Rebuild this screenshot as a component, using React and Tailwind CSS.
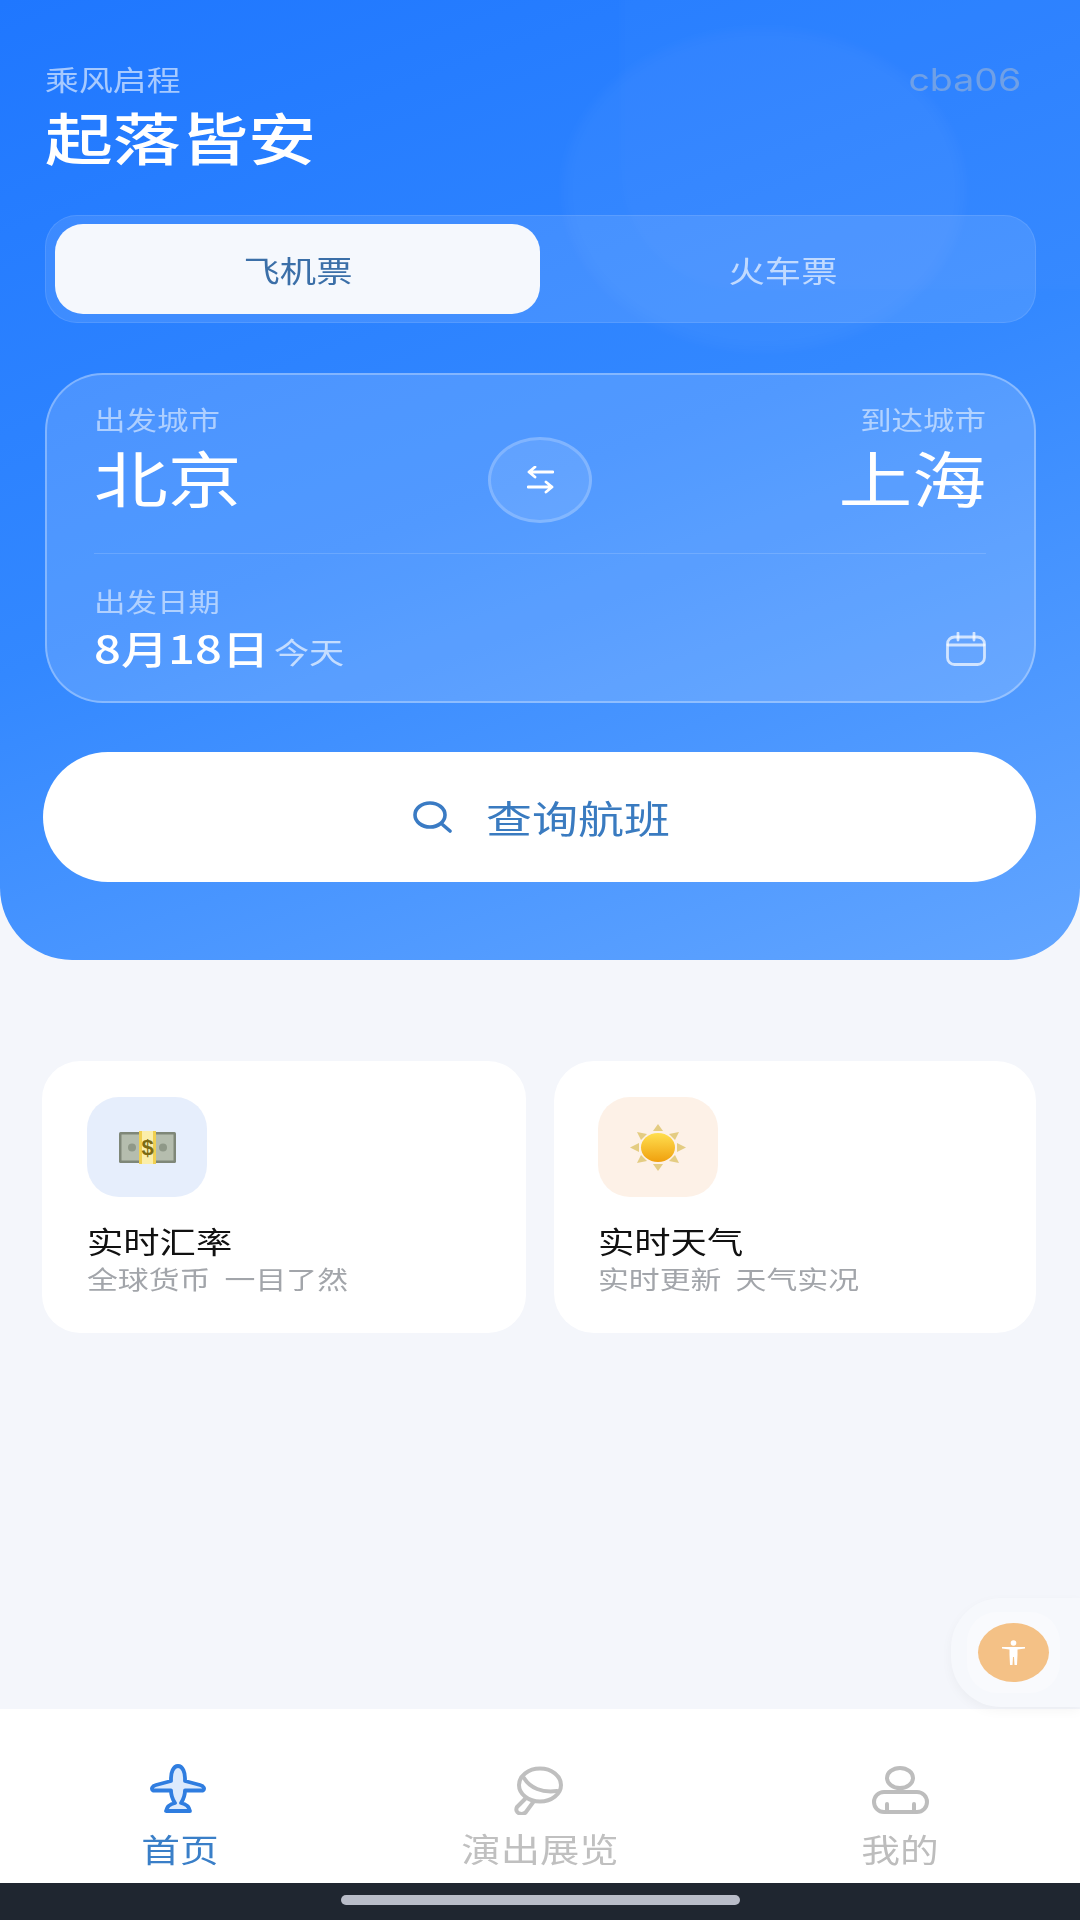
export default function App() {
  return (
    <div className="relative flex h-[1920px] w-[1080px] flex-col overflow-hidden bg-[#f4f6fb] font-['Noto_Sans_CJK_SC',sans-serif]">
      <header className="relative h-[960px] shrink-0 overflow-hidden rounded-b-[72px] bg-[linear-gradient(160deg,#1f77ff_0%,#3388ff_50%,#62a5ff_100%)] px-[45px] pt-[60px]">
        <div className="absolute left-[564px] top-[30px] h-[320px] w-[400px] rounded-[50%] bg-white/[0.035] blur-[6px]" />
        <div className="absolute left-[620px] top-[-10px] h-[300px] w-[470px] rounded-bl-[120px] bg-white/[0.015] blur-[4px]" />
        <div className="relative">
          <div className="flex h-[40px] items-center justify-between pr-[14px]">
            <span className="-mt-[2px] inline-block origin-left scale-x-[1.21] whitespace-nowrap text-[28px] leading-[40px] text-white/60">乘风启程</span>
            <span className="inline-block origin-right scale-x-[1.21] whitespace-nowrap font-['Inter',sans-serif] text-[31px] leading-[40px] text-[#70a0e6]">cba06</span>
          </div>
          <div className="mt-[4px] h-[66px]">
            <span className="inline-block origin-left scale-x-[1.21] whitespace-nowrap text-[56px] font-medium leading-[64px] text-white">起落皆安</span>
          </div>
          <div className="mt-[45px] flex h-[108px] w-[991px] items-center rounded-[32px] border border-white/10 bg-white/10 px-[9px]">
            <div className="flex h-[90px] w-[485px] items-center justify-center rounded-[28px] bg-[#f5f8fd]">
              <span className="inline-block origin-center scale-x-[1.21] whitespace-nowrap text-[30px] leading-[40px] text-[#3b6fa8]">飞机票</span>
            </div>
            <div className="flex h-[90px] flex-1 items-center justify-center">
              <span className="inline-block origin-center scale-x-[1.21] whitespace-nowrap text-[30px] leading-[40px] text-white/65">火车票</span>
            </div>
          </div>
          <div className="mt-[50px] h-[330px] w-[991px] rounded-[58px] border-2 border-white/30 bg-white/15 pl-[47px] pr-[48px] pt-[27px]">
            <div className="flex h-[121px] justify-between">
              <div className="w-[200px]">
                <div className="h-[34px]">
                  <span className="inline-block origin-left scale-x-[1.21] whitespace-nowrap text-[26px] leading-[34px] text-white/55">出发城市</span>
                </div>
                <div className="mt-[6px] h-[70px]">
                  <span className="inline-block origin-left scale-x-[1.21] whitespace-nowrap text-[61px] leading-[70px] text-white">北京</span>
                </div>
              </div>
              <div className="mt-[35px] flex h-[86px] w-[104px] items-center justify-center rounded-[50%] border-[3px] border-white/20 bg-white/10">
                <svg width="27" height="28" viewBox="0 0 27 28" fill="none" stroke="white" strokeWidth="2.8" strokeLinecap="round" strokeLinejoin="round">
                  <path d="M26 6H2M8 1L2 6L8 11" />
                  <path d="M1 21H25M19 16L25 21L19 26" />
                </svg>
              </div>
              <div className="w-[200px] text-right">
                <div className="h-[34px]">
                  <span className="inline-block origin-right scale-x-[1.21] whitespace-nowrap text-[26px] leading-[34px] text-white/55">到达城市</span>
                </div>
                <div className="mt-[6px] h-[70px]">
                  <span className="inline-block origin-right scale-x-[1.21] whitespace-nowrap text-[61px] leading-[70px] text-white">上海</span>
                </div>
              </div>
            </div>
            <div className="mt-[30px] h-[1px] bg-white/15" />
            <div className="mt-[30px] h-[34px]">
              <span className="inline-block origin-left scale-x-[1.21] whitespace-nowrap text-[26px] leading-[34px] text-white/55">出发日期</span>
            </div>
            <div className="mt-[6px] flex h-[50px] items-center justify-between">
              <div className="flex origin-left scale-x-[1.21] items-baseline gap-[4px] whitespace-nowrap">
                <span className="text-[39px] font-medium leading-[50px] text-white">8月18日</span>
                <span className="text-[29px] leading-[50px] text-white/65">今天</span>
              </div>
              <svg width="40" height="34" viewBox="0 0 40 34" fill="none" stroke="white" strokeOpacity="0.7" strokeWidth="2.8" strokeLinecap="round">
                <rect x="1.5" y="5" width="37" height="27.5" rx="7" />
                <path d="M2 13H38M12 1V8M28 1V8" />
              </svg>
            </div>
          </div>
          <button className="mt-[49px] flex h-[130px] w-[993px] -translate-x-[2px] items-center justify-center gap-[33px] rounded-full bg-white">
            <svg width="40" height="32" viewBox="0 0 40 32" fill="none" stroke="#3a7bc4" strokeWidth="3.6" strokeLinecap="round">
              <ellipse cx="17" cy="14" rx="15" ry="12" />
              <path d="M30 24L37 30" />
            </svg>
            <div className="w-[181px] text-left">
              <span className="inline-block origin-left scale-x-[1.21] whitespace-nowrap text-[38px] leading-[48px] text-[#3a7bc0]">查询航班</span>
            </div>
          </button>
        </div>
      </header>

      <section className="mt-[101px] flex gap-[28px] pl-[42px] pr-[44px]">
        <div className="h-[272px] flex-1 rounded-[38px] bg-white pl-[45px] pt-[36px]">
          <div className="flex h-[100px] w-[120px] items-center justify-center rounded-[32px] bg-[#e6eefc]">
            <svg width="57" height="33" viewBox="0 0 57 33">
              <rect x="0" y="1" width="57" height="31" rx="1.5" fill="#7f8778" />
              <rect x="2.5" y="3.5" width="52" height="26" fill="#b5bdae" />
              <circle cx="13" cy="16.5" r="4" fill="#8f9888" />
              <circle cx="44" cy="16.5" r="4" fill="#8f9888" />
              <rect x="20" y="0" width="17" height="33" fill="#f0cf50" />
              <rect x="23" y="0" width="11" height="33" fill="#fbeeaa" />
              <text x="28.5" y="24" textAnchor="middle" fontSize="22" fontWeight="700" fill="#7c6a12" fontFamily="'Liberation Sans', sans-serif">$</text>
            </svg>
          </div>
          <div className="mt-[23px] h-[40px]">
            <span className="inline-block origin-left scale-x-[1.21] whitespace-nowrap text-[30px] leading-[40px] text-[#111111]">实时汇率</span>
          </div>
          <div className="h-[36px]">
            <span className="inline-block origin-left scale-x-[1.21] whitespace-nowrap text-[25.5px] leading-[36px] text-[#a2a5aa] [word-spacing:6px]">全球货币 一目了然</span>
          </div>
        </div>
        <div className="h-[272px] flex-1 rounded-[40px] bg-white pl-[44px] pt-[36px]">
          <div className="flex h-[100px] w-[120px] items-center justify-center rounded-[32px] bg-[#fdf1e7]">
            <svg width="56" height="47" viewBox="0 0 56 47">
              <defs>
                <linearGradient id="sun" x1="0" y1="0" x2="0" y2="1">
                  <stop offset="0" stopColor="#ffdf50" />
                  <stop offset="1" stopColor="#f0a00e" />
                </linearGradient>
              </defs>
              <g fill="#e4cc82">
                <path d="M28 0L33 7H23Z" />
                <path d="M28 47L33 40H23Z" />
                <path d="M0 23.5L9 19V28Z" />
                <path d="M56 23.5L47 19V28Z" />
                <path d="M7 8L17 10L11 16Z" />
                <path d="M49 8L39 10L45 16Z" />
                <path d="M7 39L17 37L11 31Z" />
                <path d="M49 39L39 37L45 31Z" />
              </g>
              <ellipse cx="28" cy="23.5" rx="17" ry="14.5" fill="url(#sun)" />
            </svg>
          </div>
          <div className="mt-[23px] h-[40px]">
            <span className="inline-block origin-left scale-x-[1.21] whitespace-nowrap text-[30px] leading-[40px] text-[#111111]">实时天气</span>
          </div>
          <div className="h-[36px]">
            <span className="inline-block origin-left scale-x-[1.21] whitespace-nowrap text-[25.5px] leading-[36px] text-[#a2a5aa] [word-spacing:6px]">实时更新 天气实况</span>
          </div>
        </div>
      </section>

      <div className="absolute right-0 top-[1598px] flex h-[109px] w-[129px] items-center rounded-l-[50px] bg-[#f6f8fc] pl-[16px] shadow-[0_4px_12px_rgba(0,0,0,0.04)]">
        <div className="flex h-[81px] w-[93px] items-center justify-center rounded-[30px] bg-[#f9fafd]">
          <div className="flex h-[59px] w-[71px] items-center justify-center rounded-[50%] bg-[#f4c186]">
            <svg width="23" height="25" viewBox="0 0 23 25" fill="white">
              <circle cx="11.5" cy="3" r="2.8" />
              <path d="M0 7H23V8.6L15.5 9.5V15L15 25H12.5L12 17H11L10.5 25H8L7.5 15V9.5L0 8.6Z" />
            </svg>
          </div>
        </div>
      </div>

      <nav className="mt-auto flex h-[174px] shrink-0 bg-white">
        <div className="flex w-[360px] flex-col items-center pt-[54px]">
          <svg width="60" height="52" viewBox="20 12 60 52">
            <path d="M48 15C43 15 41 22 41 27V30L26 34C22 35 21 38 23 39.5H41C41 45 43 49 45 52C40 53 37 55 36 60H60C59 55 56 53 51 52C53 49 55 45 55 39.5H73C75 38 74 35 70 34L55 30V27C55 22 53 15 48 15Z" fill="#dceafd" stroke="#2f7de0" strokeWidth="3.8" strokeLinejoin="round" />
          </svg>
          <span className="mt-[13px] inline-block origin-center scale-x-[1.21] whitespace-nowrap text-[32px] leading-[40px] text-[#3a7fc8]">首页</span>
        </div>
        <div className="flex w-[360px] flex-col items-center pt-[54px]">
          <svg width="60" height="52" viewBox="20 12 60 52" fill="none" stroke="#bfbfbf" strokeWidth="4" strokeLinecap="round">
            <ellipse cx="50" cy="34" rx="21" ry="16.5" />
            <path d="M34 27C40 37 52 42 67 40" />
            <path d="M36 47L27 56C24 62 32 65 36 61L44 50" />
          </svg>
          <span className="mt-[13px] inline-block origin-center scale-x-[1.21] whitespace-nowrap text-[32.5px] leading-[40px] text-[#c0c0c0]">演出展览</span>
        </div>
        <div className="flex w-[360px] flex-col items-center pt-[54px]">
          <svg width="60" height="52" viewBox="10 12 60 52" fill="none" stroke="#bdbdbd" strokeWidth="4" strokeLinecap="round">
            <ellipse cx="40" cy="27" rx="13" ry="10" />
            <rect x="14" y="41" width="53" height="20" rx="10" />
            <path d="M27 53V60M54 53V60" />
          </svg>
          <span className="mt-[13px] inline-block origin-center scale-x-[1.21] whitespace-nowrap text-[32px] leading-[40px] text-[#bdbdbd]">我的</span>
        </div>
      </nav>
      <div className="flex h-[37px] shrink-0 items-center justify-center bg-[#1f2630] pb-[4px]">
        <div className="h-[10px] w-[399px] rounded-full bg-[#b8bcc8]" />
      </div>
    </div>
  );
}
